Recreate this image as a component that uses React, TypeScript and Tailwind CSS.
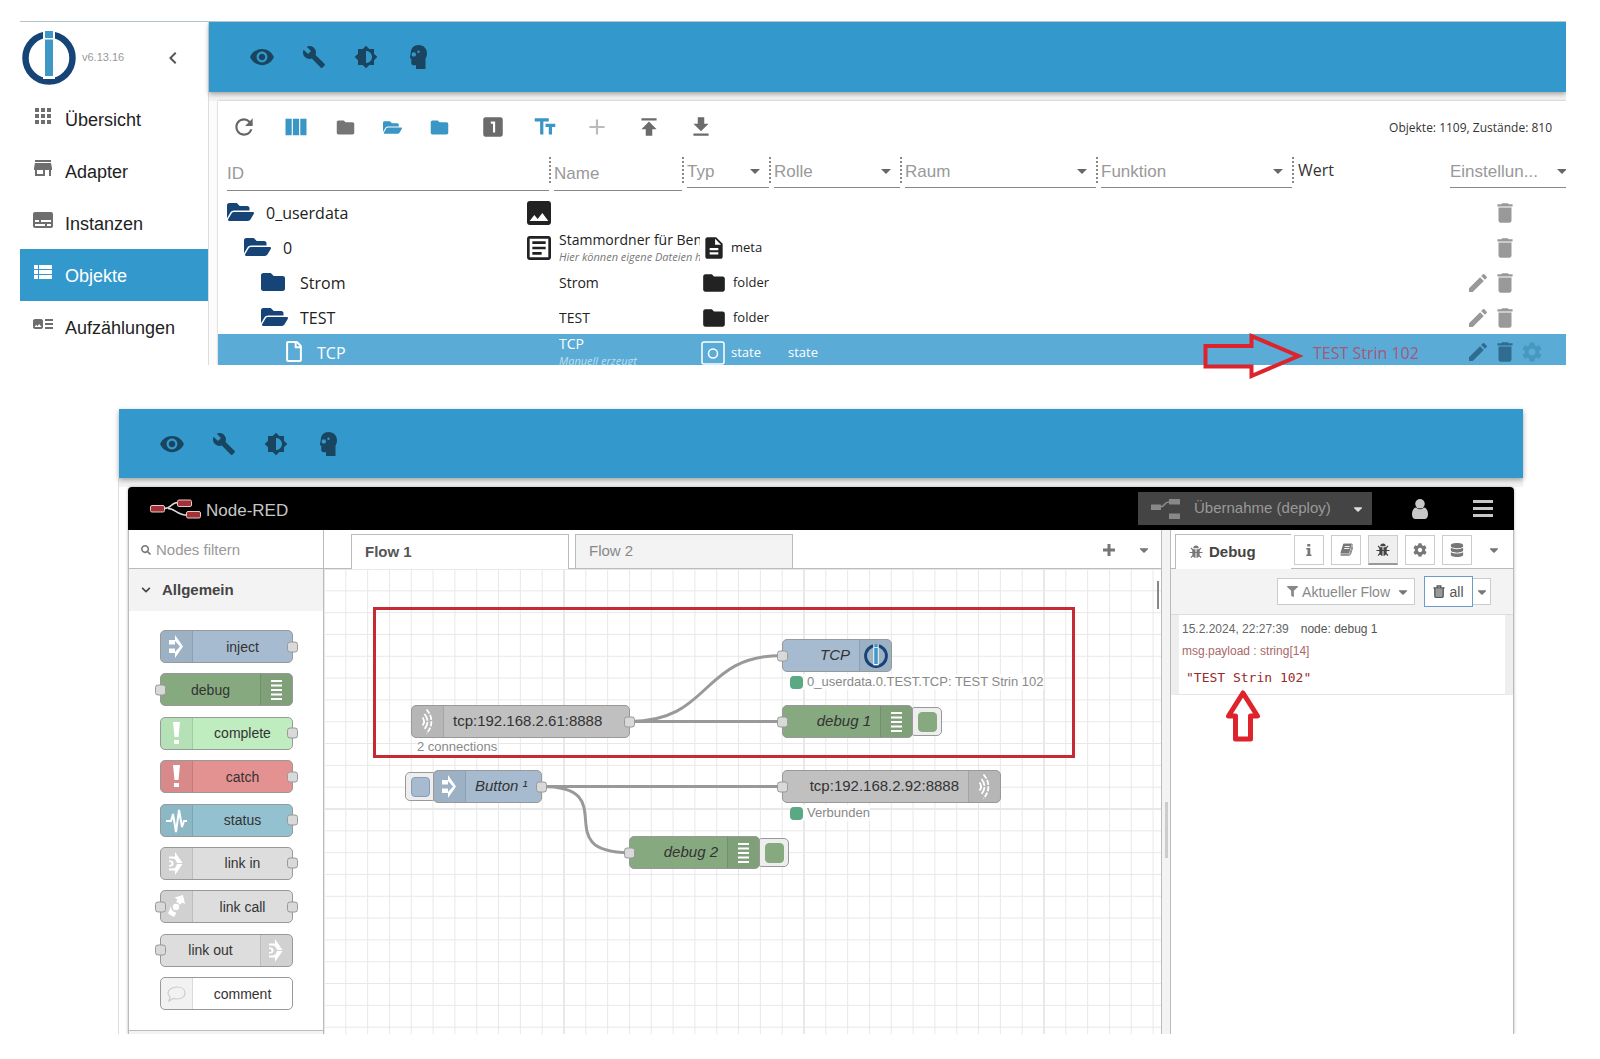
import type { ReactNode } from "react";
import clsx from "clsx";
import {
  MdAdd,
  MdApps,
  MdArrowDropDown,
  MdArtTrack,
  MdBrightness6,
  MdBuild,
  MdChevronLeft,
  MdDelete,
  MdDescription,
  MdEdit,
  MdFolder,
  MdGetApp,
  MdImage,
  MdLooksOne,
  MdOutlineArticle,
  MdPublish,
  MdRefresh,
  MdSettings,
  MdStore,
  MdSubtitles,
  MdTextFields,
  MdViewColumn,
  MdViewList,
  MdVisibility,
} from "react-icons/md";
import { FaCaretDown, FaChevronDown, FaCog, FaDatabase, FaFilter, FaFolder, FaFolderOpen, FaRegFile, FaSearch } from "react-icons/fa";

/* ---------- Icons ---------- */

function IoBrokerLogo({ className }: { className?: string }) {
  return (
    <svg viewBox="0 0 54 54" className={className} aria-hidden="true">
      <circle cx="27" cy="27" r="23.5" fill="none" stroke="#164477" strokeWidth="6.5" />
      <path d="M21 0h12v48H21z" fill="#fff" />
      <path d="M23 0h8v7h-8zM23 8.500h8v36.500h-8z" fill="#3f97c6" />
    </svg>
  );
}

function ExpertIcon({ className }: { className?: string }) {
  return (
    <svg viewBox="0 0 24 24" className={className} aria-hidden="true">
      <path
        fill="currentColor"
        fillRule="evenodd"
        d="M12.500 0C8 0 5 3 4.800 7.500L4 12.500c-.1.700.2 1.100.7 1.100h.6v4.400c0 1.300.8 2.200 2 2.200H10V24h9.500V13.500c1-1.500 1.500-3.200 1.500-5C21 3.500 17.500 0 12.500 0zM7.800 7.200a2.200 2.200 0 1 1 0 4.400 2.200 2.200 0 0 1 0-4.400zM12.500 5.500a1.200 1.200 0 1 1 0 2.400 1.200 1.200 0 0 1 0-2.400z"
      />
    </svg>
  );
}

function StateIcon() {
  return (
    <svg viewBox="0 0 24 24" className="size-6" fill="none" stroke="currentColor" strokeWidth="1.500" aria-hidden="true">
      <rect x="1" y="1" width="22" height="22" rx="2" />
      <circle cx="12" cy="12.500" r="4.500" />
    </svg>
  );
}

function NodeRedLogo() {
  return (
    <svg viewBox="0 0 52 20" className="h-5 w-[52px]" aria-hidden="true">
      <path d="M14 9.500c9 0 6-6 14-6M18 9.500c8 0 8 6.500 20 6.500" fill="none" stroke="#ddd" strokeWidth="1.500" />
      <g fill="#a33236" stroke="#e8c9c9" strokeWidth="1">
        <rect x=".5" y="6.500" width="14" height="6.500" rx="1.500" />
        <rect x="27.500" y="1" width="14" height="6.500" rx="1.500" />
        <rect x="36.500" y="12.500" width="14" height="6.500" rx="1.500" />
      </g>
    </svg>
  );
}

function DeployIcon() {
  return (
    <svg viewBox="0 0 30 20" className="h-5 w-[30px]" aria-hidden="true">
      <path d="M10 8c6 0 3-5 9-5" fill="none" stroke="#888" strokeWidth="1.500" />
      <path d="M1 5.500h10V11H1zM19 0h11v5.500H19zM19 14.500h11V20H19z" fill="#888" />
    </svg>
  );
}

function UserIcon() {
  return (
    <svg viewBox="0 0 16 20" className="h-5 w-4" fill="currentColor" aria-hidden="true">
      <circle cx="8" cy="4.800" r="4.800" />
      <path d="M4 8.600C1.200 9.200 0 12 0 15.500 0 18 1.300 20 3.500 20h9c2.200 0 3.500-2 3.500-4.500 0-3.500-1.200-6.300-4-6.900a5.700 5.700 0 0 1-8 0z" />
    </svg>
  );
}

function PlusIcon() {
  return (
    <svg viewBox="0 0 12 12" className="size-3" fill="currentColor" aria-hidden="true">
      <path d="M4.500 0h3v4.500H12v3H7.500V12h-3V7.500H0v-3h4.500z" />
    </svg>
  );
}

function BugIcon() {
  return (
    <svg viewBox="0 0 14 14" className="size-3.5" aria-hidden="true">
      <path d="M.5 7.500h13M2 3l2.500 2.500M12 3 9.500 5.500M2 12.500l2.500-2.500M12 12.500 9.500 10" stroke="currentColor" strokeWidth="1.100" />
      <path d="M4.300 3.200a2.700 2.700 0 0 1 5.400 0zM3.300 4.200h3.200V13C4.500 12.800 3.300 11 3.300 8.500zM7.500 4.200h3.200v4.300c0 2.500-1.200 4.300-3.200 4.500z" fill="currentColor" />
    </svg>
  );
}

function InfoIcon() {
  return (
    <svg viewBox="0 0 14 14" className="size-3.5" fill="currentColor" aria-hidden="true">
      <path d="M5.300 1h3v2.400h-3zM4.300 5h4v6.500h1.200V13H4.300v-1.500h1.200V6.500H4.300z" />
    </svg>
  );
}

function BookIcon() {
  return (
    <svg viewBox="0 0 14 14" className="size-3.5" aria-hidden="true">
      <path d="M4.500 1h8c.8 0 1 .5.8 1.200l-2.400 8.300c-.2.500-.5.800-1 .8H2.500c-.8 0-1.100.6-.6 1h8.400c.6 0 1-.3 1.200-.9L13.900 4" fill="none" stroke="currentColor" strokeWidth=".9" />
      <path d="M4.200 1h8.600l-2.800 9.600H1.300z" fill="currentColor" />
      <path d="M5.700 3.500h5M5.200 5.500h5" stroke="#fff" strokeWidth=".9" />
    </svg>
  );
}

function TrashIcon() {
  return (
    <svg viewBox="0 0 12 13" className="h-[13px] w-3" aria-hidden="true">
      <path d="M1.800 4h8.400v7.800h-8.400z" fill="#999" />
      <path d="M4.200 2.500v-1.500h3.600v1.500M.5 3h11M1.800 3v8.200c0 .7.400 1.100 1 1.100h6.400c.6 0 1-.4 1-1.100V3" fill="none" stroke="#555" strokeWidth="1.300" />
    </svg>
  );
}

const nodeIcons = {
  inject: <path d="M9 9h6V4l8 11.500L15 27v-5H9v-4.500h6V21l5-5.500-5-5.500v3.500H9z" />,
  debug: <path d="M11 6h11v2H11zM11 10.500h11v2H11zM11 15h11v2H11zM11 19.500h11v2H11zM11 24h11v2H11z" />,
  alert: <path d="M13 4h7l-1.500 15h-4zM14 22h5v4h-5z" />,
  status: <path d="M6 16h5l2-7 3 18 3-22 3 17 2-6h3" fill="none" stroke="#fff" strokeWidth="2" />,
  link: (
    <g>
      <path d="M15 4l7.500 11H17c-.6-2.500-2.200-4.500-4.500-4.500H9V8.500h6zM15 27l7.500-11H17c-.6 2.500-2.200 4.500-4.500 4.500H9v2h6z" />
      <path d="M9 12.500h1.500a3 3 0 0 1 0 6H9v-1.500h1a1.500 1.500 0 0 0 0-3H9z" />
    </g>
  ),
  linkCall: (
    <g>
      <path d="M14.500 6.500l8.500-2.500 2 9-3-1.500-2 2.500a5.500 5.500 0 0 0-4-3l1.500-2.500z" />
      <circle cx="16" cy="16" r="3.200" />
      <path d="M11 15a5.500 5.500 0 0 0 5.500 6.500l-2.500 4.500-6-3.500z" />
    </g>
  ),
  comment: (
    <path d="M17 9c5 0 8 2.500 8 6s-3 6-8 6c-1.500 0-2.500-.2-3.700-.6L9 23l1-4c-1.300-1-2-2.500-2-4 0-3.500 4-6 9-6z" fill="none" stroke="#ccc" strokeWidth="1.200" />
  ),
  waves: (
    <g fill="none" stroke="#fff" strokeWidth="1.800">
      <path d="M15.500 3.500c6.500 7 6.500 17 0 24" strokeDasharray="5 1.500" />
      <path d="M13.500 8c4 4.500 4 10.500 0 15" strokeDasharray="7.500 1.200" />
      <path d="M11.500 11.500c2 2.500 2 5.500 0 8" />
    </g>
  ),
  iobroker: null,
};

type IconName = keyof typeof nodeIcons;

/* ---------- ioBroker ---------- */

function AppBar({ className }: { className: string }) {
  const actions = [
    { label: "Ansicht", icon: <MdVisibility className="size-[26px]" /> },
    { label: "Werkzeuge", icon: <MdBuild className="size-6" /> },
    { label: "Thema", icon: <MdBrightness6 className="size-6" /> },
    { label: "Expertenmodus", icon: <ExpertIcon className="size-6" /> },
  ];

  return (
    <header className={clsx("relative flex items-center gap-[26px] bg-[#3399cc] pl-10 text-[#1a4560] shadow-[0_2px_5px_rgba(0,0,0,0.35)]", className)}>
      {actions.map((action) => (
        <button key={action.label} aria-label={action.label} className="flex size-[26px] items-center justify-center">
          {action.icon}
        </button>
      ))}
    </header>
  );
}

function SideMenu() {
  const items = [
    { label: "Übersicht", icon: MdApps },
    { label: "Adapter", icon: MdStore },
    { label: "Instanzen", icon: MdSubtitles },
    { label: "Objekte", icon: MdViewList },
    { label: "Aufzählungen", icon: MdArtTrack },
  ];

  return (
    <nav className="w-[189px] shrink-0 border-r border-[#ddd]">
      <div className="flex h-[71px] items-center pl-0.5">
        <IoBrokerLogo className="size-[54px]" />
        <span className="ml-1.5 text-[11px] text-[#999]">v6.13.16</span>
        <button aria-label="Menü einklappen" className="ml-[37px] text-[#555]">
          <MdChevronLeft className="size-6" />
        </button>
      </div>
      {items.map(({ label, icon: Icon }) => {
        const isActive = label === "Objekte";
        return (
          <a
            key={label}
            href="#"
            className={clsx("flex h-[52px] items-center gap-2.5 pl-[11px] text-lg", isActive ? "bg-[#3399cc] text-white" : "text-[#222]")}
          >
            <Icon className={clsx("mb-1.5 size-6", !isActive && "text-[#6e6e6e]")} />
            <span className="pt-0.5">{label}</span>
          </a>
        );
      })}
    </nav>
  );
}

function FilterSelect({ label, className }: { label: string; className: string }) {
  return (
    <div className={clsx("h-[26px] shrink-0 pl-[3px]", className)}>
      <div className="relative h-[31px] border-b border-[#888]">
        <select aria-label={label} className="h-[30px] w-full appearance-none text-[17px] text-[#999] outline-none">
          <option>{label}</option>
        </select>
        <MdArrowDropDown className="pointer-events-none absolute top-0.5 right-0.5 size-6 text-[#666]" />
      </div>
    </div>
  );
}

function ObjectFilters() {
  return (
    <div className="flex h-[41px] items-start pt-1">
      <div className="h-[26px] w-[333px] shrink-0 border-r-2 border-dotted border-[#888] pl-[9px]">
        <input aria-label="ID" placeholder="ID" className="h-[34px] w-full border-b border-[#888] text-[17px] outline-none placeholder:text-[#999]" />
      </div>
      <div className="h-[26px] w-[133px] shrink-0 border-r-2 border-dotted border-[#888] pl-[3px]">
        <input aria-label="Name" placeholder="Name" className="h-[34px] w-full border-b border-[#888] text-[17px] outline-none placeholder:text-[#999]" />
      </div>
      <FilterSelect label="Typ" className="w-[87px] border-r-2 border-dotted border-[#888]" />
      <FilterSelect label="Rolle" className="w-[131px] border-r-2 border-dotted border-[#888]" />
      <FilterSelect label="Raum" className="w-[196px] border-r-2 border-dotted border-[#888]" />
      <FilterSelect label="Funktion" className="w-[196px] border-r-2 border-dotted border-[#888]" />
      <div className="flex-1 pt-px pl-1 font-['Open_Sans',sans-serif] text-base text-[#333]">Wert</div>
      <div className="-mr-2.5 w-[129px] shrink-0">
        <FilterSelect label="Einstellun..." className="w-full" />
      </div>
    </div>
  );
}

interface ObjectRow {
  id: string;
  indent: string;
  kind: "open" | "closed" | "file";
  badge?: ReactNode;
  name?: string;
  desc?: string;
  type?: string;
  role?: string;
  value?: string;
  editable?: boolean;
}

const objectRows: ObjectRow[] = [
  { id: "0_userdata", indent: "pl-[9px]", kind: "open", badge: <MdImage className="size-8" /> },
  {
    id: "0",
    indent: "pl-[26px]",
    kind: "open",
    badge: <MdOutlineArticle className="size-8" />,
    name: "Stammordner für Ben",
    desc: "Hier können eigene Dateien ho",
    type: "meta",
  },
  { id: "Strom", indent: "pl-[43px]", kind: "closed", name: "Strom", type: "folder", editable: true },
  { id: "TEST", indent: "pl-[43px]", kind: "open", name: "TEST", type: "folder", editable: true },
  { id: "TCP", indent: "pl-[60px]", kind: "file", name: "TCP", desc: "Manuell erzeugt", type: "state", role: "state", value: "TEST Strin 102", editable: true },
];

function ObjectTable() {
  return (
    <table aria-label="Objekte" className="w-full table-fixed border-collapse font-['Open_Sans',sans-serif] text-[#222]">
      <colgroup>
        <col className="w-[305px]" />
        <col className="w-[36px]" />
        <col className="w-[142px]" />
        <col className="w-[87px]" />
        <col className="w-[525px]" />
        <col />
        <col className="w-[100px]" />
      </colgroup>
      <tbody>
        {objectRows.map((row) => {
          const selected = row.kind === "file";
          return (
            <tr key={row.id} className={clsx(selected ? "h-[31px] bg-[#5aacd6] text-white" : "h-[35px]")}>
              <td className={clsx("p-0", row.indent)}>
                <div className={clsx("flex items-center gap-[7px] text-base", selected ? "h-[31px] pt-1" : "h-[35px]")}>
                  <span className={clsx("flex w-8 shrink-0", selected ? "justify-center" : "text-[#164477]")}>
                    {row.kind === "open" && <FaFolderOpen className="h-6 w-[27px]" />}
                    {row.kind === "closed" && <FaFolder className="size-6" />}
                    {row.kind === "file" && <FaRegFile className="h-[21px] w-4" />}
                  </span>
                  <span className="pt-0.5">{row.id}</span>
                </div>
              </td>
              <td className="p-0 pt-0.5">{row.badge}</td>
              <td className="p-0">
                <div className={clsx("mr-px flex flex-col overflow-hidden whitespace-nowrap", selected ? "h-[31px] pt-px" : "h-[35px] justify-center pt-0.5")}>
                  <span className={clsx("shrink-0 text-sm", row.desc ? "leading-[18px]" : "leading-5")}>{row.name}</span>
                  {row.desc && <span className={clsx("shrink-0 text-[11px] leading-4 italic", selected ? "text-[#bcdff0]" : "text-[#777]")}>{row.desc}</span>}
                </div>
              </td>
              <td className="p-0">
                {row.type && (
                  <div className={clsx("flex items-center text-[13px]", selected ? "h-[31px] overflow-hidden pt-1.5" : "pt-0.5")}>
                    <span className="flex w-[30px] shrink-0">
                      {row.type === "meta" && <MdDescription className="size-[26px]" />}
                      {row.type === "folder" && <MdFolder className="size-[26px]" />}
                      {row.type === "state" && <StateIcon />}
                    </span>
                    <span className={clsx(row.type === "folder" && "pl-0.5")}>{row.type}</span>
                  </div>
                )}
              </td>
              <td className="p-0 pt-1.5 text-[13px]">{row.role}</td>
              <td className="p-0 pt-1.5 text-base leading-6 text-[#a8567c]">{row.value}</td>
              <td className="p-0">
                <div className={clsx("flex items-center gap-0.5", selected ? "pt-[5px] text-[#2f6d90]" : "pt-0.5 text-[#999]")}>
                  {row.editable ? (
                    <button aria-label={`${row.id} bearbeiten`}>
                      <MdEdit className="size-6" />
                    </button>
                  ) : (
                    <span className="w-6" />
                  )}
                  <button aria-label={`${row.id} löschen`}>
                    <MdDelete className="size-[26px]" />
                  </button>
                  {selected && (
                    <button aria-label="Einstellungen" className="text-[#4797bf]">
                      <MdSettings className="size-6" />
                    </button>
                  )}
                </div>
              </td>
            </tr>
          );
        })}
      </tbody>
    </table>
  );
}

function ObjectToolbar() {
  const tools = [
    { label: "Aktualisieren", className: "w-[52px] text-[#666]", icon: <MdRefresh className="size-[26px]" /> },
    { label: "Spalten", className: "w-[52px] text-[#3a96c4]", icon: <MdViewColumn className="size-7" /> },
    { label: "Alle einklappen", className: "w-[47px] text-[#757575]", icon: <MdFolder className="size-[21px]" /> },
    { label: "Alle ausklappen", className: "w-[47px] text-[#3a96c4]", icon: <FaFolderOpen className="size-[19px]" /> },
    { label: "Stufe zurück", className: "mr-1 w-[47px] text-[#3a96c4]", icon: <MdFolder className="size-[21px]" /> },
    { label: "Stufe", className: "w-[52px] text-[#6b6b6b]", icon: <MdLooksOne className="size-[26px]" /> },
    { label: "Beschreibung", className: "w-[52px] text-[#3a96c4]", icon: <MdTextFields className="size-[26px]" /> },
    { label: "Hinzufügen", className: "w-[52px] text-[#bbb]", icon: <MdAdd className="size-[26px]" /> },
    { label: "Hochladen", className: "w-[52px] text-[#6b6b6b]", icon: <MdPublish className="size-[26px]" /> },
    { label: "Herunterladen", className: "w-[52px] text-[#6b6b6b]", icon: <MdGetApp className="size-[26px]" /> },
  ];

  return (
    <div className="flex h-[52px] items-center">
      {tools.map((tool) => (
        <button key={tool.label} aria-label={tool.label} className={clsx("flex justify-center", tool.className)}>
          {tool.icon}
        </button>
      ))}
      <span className="ml-auto pt-0.5 pr-3.5 font-['Open_Sans',sans-serif] text-xs text-[#333]">Objekte: 1109, Zustände: 810</span>
    </div>
  );
}

function ObjectsPanel() {
  return (
    <section className="relative mr-[34px] ml-5">
      <div className="flex overflow-hidden border-t border-[#b4c4cc]">
        <SideMenu />
        <div className="min-w-0 flex-1 bg-[linear-gradient(#f2f2f2_79px,#fcfcfc_79px)]">
          <AppBar className="h-[70px]" />
          <div className="mt-[9px] ml-[9px] bg-white shadow-[0_0_2px_rgba(0,0,0,0.3)]">
            <ObjectToolbar />
            <ObjectFilters />
            <ObjectTable />
          </div>
        </div>
      </div>
      {/* Hint arrow towards the value */}
      <svg viewBox="0 0 100 46" className="absolute right-[263px] -bottom-3.5 h-[46px] w-[100px]" aria-hidden="true">
        <path d="M2.500 13h46V3l47 20-47 20V33.500h-46z" fill="none" stroke="#dd232b" strokeWidth="4" />
      </svg>
    </section>
  );
}

/* ---------- Node-RED ---------- */

const nodeColors = {
  blue: "bg-[#a6bbcf]",
  green: "bg-[#87a980]",
  lime: "bg-[#c0edc0]",
  red: "bg-[#e49191]",
  teal: "bg-[#94c1d0]",
  light: "bg-[#dddddd]",
  gray: "bg-[#c0c0c0]",
  white: "bg-white",
};

type NodeColor = keyof typeof nodeColors;

function NodeIcon({ icon, side }: { icon: IconName; side: "left" | "right" }) {
  return (
    <span
      className={clsx(
        "flex h-full w-8 shrink-0 items-center justify-center border-black/10 bg-black/5",
        side === "left" ? "rounded-l border-r" : "rounded-r border-l",
      )}
    >
      {icon === "iobroker" ? (
        <IoBrokerLogo className="size-6" />
      ) : (
        <svg viewBox="1 0 31 31" className="size-[31px] shrink-0" fill="#fff" aria-hidden="true">
          {nodeIcons[icon]}
        </svg>
      )}
    </span>
  );
}

const portClass = "absolute top-1/2 size-[11px] -translate-y-1/2 rounded-[3px] border border-[#999] bg-[#d9d9d9]";

interface FlowNodeProps {
  label: string;
  color: NodeColor;
  icon: IconName;
  iconRight?: boolean;
  input?: boolean;
  output?: boolean;
  textClass?: string;
}

function FlowNode({ label, color, icon, iconRight, input, output, textClass = "text-center text-sm" }: FlowNodeProps) {
  return (
    <div className={clsx("relative flex h-[33px] w-full items-center rounded-[5px] border border-[#999]", nodeColors[color])}>
      {!iconRight && <NodeIcon icon={icon} side="left" />}
      <span className={clsx("flex-1 whitespace-nowrap text-[#333]", textClass)}>{label}</span>
      {iconRight && <NodeIcon icon={icon} side="right" />}
      {input && <span className={clsx(portClass, "-left-1.5")} />}
      {output && <span className={clsx(portClass, "-right-1.5")} />}
    </div>
  );
}

function Palette() {
  const nodes: FlowNodeProps[] = [
    { label: "inject", color: "blue", icon: "inject", output: true },
    { label: "debug", color: "green", icon: "debug", iconRight: true, input: true },
    { label: "complete", color: "lime", icon: "alert", output: true },
    { label: "catch", color: "red", icon: "alert", output: true },
    { label: "status", color: "teal", icon: "status", output: true },
    { label: "link in", color: "light", icon: "link", output: true },
    { label: "link call", color: "light", icon: "linkCall", input: true, output: true },
    { label: "link out", color: "light", icon: "link", iconRight: true, input: true },
    { label: "comment", color: "white", icon: "comment" },
  ];

  return (
    <aside className="w-[196px] shrink-0 border-x border-[#bbb]">
      <label className="flex h-[39px] items-center gap-[5px] border-b border-[#bbb] pt-px pl-3 text-[#777]">
        <FaSearch className="size-2.5" />
        <input aria-label="Nodes filtern" placeholder="Nodes filtern" className="w-36 pt-0.5 text-[15px] outline-none placeholder:text-[#999]" />
      </label>
      <button className="flex h-[42px] w-full items-center gap-[11px] bg-[#f3f3f3] pl-3 text-[15px] font-bold text-[#444]">
        <FaChevronDown className="size-2.5" />
        Allgemein
      </button>
      <div className="flex h-[419px] flex-col justify-between pt-[19px] pr-[30px] pb-5 pl-[31px]">
        {nodes.map((node) => (
          <FlowNode key={node.label} {...node} />
        ))}
      </div>
      <div className="h-1 border-t border-[#bbb] bg-[#f3f3f3]" />
    </aside>
  );
}

function StatusDot() {
  return <span className="size-[13px] rounded bg-[#5aa884]" />;
}

function ToggleButton({ color, className }: { color: NodeColor; className: string }) {
  return (
    <button aria-label="Auslösen" className={clsx("absolute flex h-[29px] w-8 items-center rounded-[5px] border border-[#999] bg-[#eee]", className)}>
      <span className={clsx("h-5 w-[19px] rounded border", color === "blue" ? "border-[#8a9bb5]" : "border-[#87a980]", nodeColors[color])} />
    </button>
  );
}

// Grid cells are 20 flow units wide, shown at a zoom of 12/11
const CELL = 240 / 11;
const gridIndexes = Array.from({ length: 80 }, (_, i) => i);

function Workspace() {
  return (
    <div className="relative flex-1 overflow-hidden bg-white">
      <svg className="absolute inset-0 size-full" aria-hidden="true">
        {gridIndexes.map((i) => (
          <g key={i} stroke="#e8e8e8">
            <line x1={i * CELL} x2={i * CELL} y1="0" y2="2000" strokeWidth={i % 11 === 0 ? 2 : 1} />
            <line y1={i * CELL} y2={i * CELL} x1="0" x2="3000" strokeWidth={i % 11 === 0 ? 2 : 1} />
          </g>
        ))}
        <g fill="none" stroke="#999" strokeWidth="3">
          <path d="M306 152.500H458" />
          <path d="M306 152.500C388 152.500 376 86.500 458 86.500" />
          <path d="M218 217.500H458" />
          <path d="M218 217.500C300 217.500 223 283.500 305 283.500" />
        </g>
      </svg>

      <div className="absolute top-[136px] left-[87px] w-[219px]">
        <FlowNode label="tcp:192.168.2.61:8888" color="gray" icon="waves" output textClass="pl-[9px] text-[15px]" />
        <span className="absolute top-[34px] left-1.5 bg-white/80 text-[13px] leading-4 whitespace-nowrap text-[#888]">2 connections</span>
      </div>
      <div className="absolute top-[70px] left-[458px] w-[110px]">
        <FlowNode label="TCP" color="blue" icon="iobroker" iconRight input textClass="pr-[9px] text-right text-[15px] italic" />
        <div className="absolute top-[35px] left-2 flex items-center gap-1 bg-white/80 text-[13px] leading-4 whitespace-nowrap text-[#888]">
          <StatusDot />
          0_userdata.0.TEST.TCP: TEST Strin 102
        </div>
      </div>
      <ToggleButton color="green" className="top-[138px] left-[586px] justify-end pr-1" />
      <div className="absolute top-[136px] left-[458px] w-[131px]">
        <FlowNode label="debug 1" color="green" icon="debug" iconRight input textClass="pr-[9px] text-right text-[15px] italic" />
      </div>
      <ToggleButton color="blue" className="top-[203px] left-[81px] pl-[5px]" />
      <div className="absolute top-[201px] left-[109px] w-[109px]">
        <FlowNode label="Button ¹" color="blue" icon="inject" output textClass="pl-[9px] text-[15px] italic" />
      </div>
      <div className="absolute top-[201px] left-[458px] w-[219px]">
        <FlowNode label="tcp:192.168.2.92:8888" color="gray" icon="waves" iconRight input textClass="pr-[9px] text-right text-[15px]" />
        <div className="absolute top-[35px] left-2 flex items-center gap-1 bg-white/80 text-[13px] leading-4 whitespace-nowrap text-[#888]">
          <StatusDot />
          Verbunden
        </div>
      </div>
      <ToggleButton color="green" className="top-[269px] left-[433px] justify-end pr-1" />
      <div className="absolute top-[267px] left-[305px] w-[131px]">
        <FlowNode label="debug 2" color="green" icon="debug" iconRight input textClass="pr-[9px] text-right text-[15px] italic" />
      </div>

      {/* Highlight around the TCP flow */}
      <div className="absolute top-[38px] left-[49px] h-[151px] w-[702px] border-3 border-[#c62b33]" />
      <div className="absolute top-3 right-0.5 h-7 w-0.5 bg-[#888]" />
    </div>
  );
}

function FlowTabs() {
  return (
    <div className="flex h-[39px] items-end">
      <div className="h-full w-[27px] border-b border-[#bbb]" />
      <button className="h-[35px] w-[218px] border border-b-0 border-[#bbb] pl-[13px] text-left text-[15px] font-bold text-[#555]">Flow 1</button>
      <div className="h-full w-1.5 border-b border-[#bbb]" />
      <button className="h-[35px] w-[218px] border border-[#bbb] bg-[#f3f3f3] pl-[13px] text-left text-[15px] text-[#888]">Flow 2</button>
      <div className="flex h-full flex-1 items-center justify-end gap-[22px] border-b border-[#bbb] pt-0.5 pr-2.5 text-[#777]">
        <button aria-label="Flow hinzufügen">
          <PlusIcon />
        </button>
        <button aria-label="Flows auflisten">
          <FaCaretDown className="size-3.5" />
        </button>
      </div>
    </div>
  );
}

function DebugSidebar() {
  const tabs = [
    { label: "Info", icon: <InfoIcon /> },
    { label: "Hilfe", icon: <BookIcon /> },
    { label: "Debug", icon: <BugIcon /> },
    { label: "Konfiguration", icon: <FaCog className="size-3.5" /> },
    { label: "Kontext", icon: <FaDatabase className="size-3.5" /> },
  ];

  return (
    <aside className="relative w-[344px] shrink-0 border-x border-[#bbb]">
      <div className="flex h-[39px] items-end">
        <div className="h-full w-1 border-b border-[#bbb]" />
        <div className="flex h-[35px] w-[116px] items-center gap-1.5 border-t border-l border-[#bbb] pl-[13px] text-[15px] font-bold text-[#444]">
          <span className="text-[#777]">
            <BugIcon />
          </span>
          Debug
        </div>
        <div className="flex h-full flex-1 items-center gap-[7px] border-b border-[#bbb] pt-0.5 pl-[3px] text-[#777]">
          {tabs.map((tab) => (
            <button
              key={tab.label}
              aria-label={tab.label}
              className={clsx(
                "flex size-[30px] items-center justify-center border border-[#ccc]",
                tab.label === "Debug" && "border-b-2 border-b-[#999] bg-[#efefef] text-[#444]",
              )}
            >
              {tab.icon}
            </button>
          ))}
          <button aria-label="Mehr" className="ml-2">
            <FaCaretDown className="size-3.5" />
          </button>
        </div>
      </div>

      <div className="flex h-[46px] items-center justify-end border-b border-[#ddd] bg-[#f3f3f3] pr-[22px] text-sm text-[#888]">
        <button className="mr-[9px] flex h-[27px] items-center gap-1 border border-[#ccc] bg-white pr-1 pl-[9px] whitespace-nowrap">
          <FaFilter className="size-[11px]" />
          Aktueller Flow
          <FaCaretDown className="ml-0.5 size-3.5 text-[#777]" />
        </button>
        <button className="flex h-[31px] w-[49px] items-center justify-center gap-1 border border-[#6d9ccc] bg-white text-[#555]">
          <TrashIcon />
          all
        </button>
        <button aria-label="Löschoptionen" className="flex h-[27px] w-[18px] items-center justify-center border border-l-0 border-[#ccc] bg-white text-[#777]">
          <FaCaretDown className="size-3.5" />
        </button>
      </div>

      <div className="relative border-x-8 border-b border-x-[#eee] border-b-[#e5e5e5] pt-1.5 pb-2 pl-[3px] text-xs">
        <div className="flex h-4 items-center gap-3 text-[#666]">
          <span>15.2.2024, 22:27:39</span>
          <span className="text-[#555]">node: debug 1</span>
        </div>
        <div className="mt-1.5 h-4 leading-4 text-[#aa6767]">msg.payload : string[14]</div>
        <div className="mt-[11px] h-4 pl-1 font-['DejaVu_Sans_Mono',monospace] text-[13px] leading-4 text-[#962b2b]">"TEST Strin 102"</div>
        {/* Hint arrow towards the message */}
        <svg viewBox="0 0 36 54" className="absolute top-[74px] left-[46px] h-[54px] w-9" aria-hidden="true">
          <path d="M18 4 32.500 27H25.500V50H10.500V27H3.500z" fill="#fff" stroke="#dd232b" strokeWidth="5" strokeLinejoin="round" />
        </svg>
      </div>
    </aside>
  );
}

function NodeRedPanel() {
  return (
    <section className="mt-11 mr-[77px] ml-[118px]">
      <div className="ml-px">
        <AppBar className="h-[69px]" />
      </div>
      <div className="overflow-hidden border-l border-[#ddd] bg-[linear-gradient(#f2f2f2_9px,white_9px)] pt-[9px] pr-[9px] pl-[9px]">
        <div className="rounded-t bg-white shadow-[0_0_3px_rgba(0,0,0,0.3)]">
          <header className="flex h-[43px] items-center rounded-t bg-black pr-[21px] pl-[22px] text-[17px] text-[#c7c7c7]">
            <NodeRedLogo />
            <span className="pt-1 pl-1">Node-RED</span>
            <button className="ml-auto flex h-[33px] w-[234px] items-center bg-[#444] pl-3 text-[15px] text-[#999]">
              <DeployIcon />
              <span className="ml-3.5">Übernahme (deploy)</span>
              <FaCaretDown className="ml-5 size-3.5 text-[#ddd]" />
            </button>
            <button aria-label="Benutzer" className="ml-10 text-[#c7c7c7]">
              <UserIcon />
            </button>
            <button aria-label="Hauptmenü" className="ml-[45px] flex w-5 flex-col gap-1">
              <span className="h-[3px] bg-[#c7c7c7]" />
              <span className="h-[3px] bg-[#c7c7c7]" />
              <span className="h-[3px] bg-[#c7c7c7]" />
            </button>
          </header>
          <div className="flex">
            <Palette />
            <main className="flex min-w-0 flex-1 flex-col">
              <FlowTabs />
              <Workspace />
            </main>
            <div className="flex w-[9px] shrink-0 items-center justify-center border-l border-[#bbb] bg-[#f3f3f3] pt-24">
              <div className="h-14 w-[3px] bg-[#ccc]" />
            </div>
            <DebugSidebar />
          </div>
        </div>
      </div>
    </section>
  );
}

export default function App() {
  return (
    <div className="min-h-screen bg-white pt-[21px] font-['Liberation_Sans',sans-serif]">
      <ObjectsPanel />
      <NodeRedPanel />
    </div>
  );
}
